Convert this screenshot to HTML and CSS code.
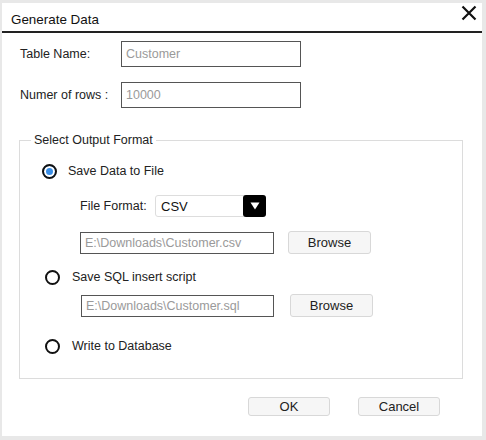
FILE: index.html
```html
<!DOCTYPE html>
<html>
<head>
<meta charset="utf-8">
<link rel="stylesheet" href="styles.css">
</head>
<body>
<div class="dialog">
  <div class="titlebar">
    <span class="title">Generate Data</span>
    <svg class="close" width="16" height="16" viewBox="0 0 16 16"><path d="M1.5 1.5 L14.5 14.5 M14.5 1.5 L1.5 14.5" stroke="#111" stroke-width="2.2" fill="none"/></svg>
  </div>
  <div class="form">
    <div class="field">
      <span class="label">Table Name:</span>
      <span class="input wide">Customer</span>
    </div>
    <div class="field">
      <span class="label">Numer of rows :</span>
      <span class="input wide">10000</span>
    </div>
  </div>
  <fieldset class="group">
    <legend>Select Output Format</legend>
    <div class="opt opt1"><span class="radio checked"></span><span>Save Data to File</span></div>
    <div class="ffrow">
      <span class="fflabel">File Format:</span>
      <span class="select"><span class="sel-text">CSV</span><span class="sel-btn"><svg width="10" height="8" viewBox="0 0 10 8"><path d="M0.5 0.5 L9.5 0.5 L5 7.5 Z" fill="#fff"/></svg></span></span>
    </div>
    <div class="pathrow p1"><span class="input path">E:\Downloads\Customer.csv</span><span class="btn browse">Browse</span></div>
    <div class="opt opt2"><span class="radio"></span><span>Save SQL insert script</span></div>
    <div class="pathrow p2"><span class="input path">E:\Downloads\Customer.sql</span><span class="btn browse">Browse</span></div>
    <div class="opt opt3"><span class="radio"></span><span>Write to Database</span></div>
  </fieldset>
  <div class="footer">
    <span class="btn action">OK</span>
    <span class="btn action">Cancel</span>
  </div>
</div>
</body>
</html>
```

FILE: styles.css
```css
html, body {
  margin: 0;
  padding: 0;
  background: #e8e8e8;
}
body {
  width: 486px;
  height: 440px;
  overflow: hidden;
  font-family: "Liberation Sans", Arial, sans-serif;
  font-size: 12.5px;
  color: #222;
}
.dialog {
  margin: 3px 0 0 2px;
  width: 480px;
  height: 433px;
  background: #fff;
  box-sizing: border-box;
  display: flex;
  flex-direction: column;
}
.titlebar {
  height: 28px;
  border-bottom: 2px solid #222;
  display: flex;
  align-items: center;
  justify-content: space-between;
  padding: 0 5px 0 9px;
}
.title {
  font-size: 13.4px;
  color: #111;
  margin-top: 5px;
}
.close {
  margin-top: -8px;
}
.form {
  display: flex;
  flex-direction: column;
  gap: 15px;
  padding: 8px 0 0 18px;
}
.field {
  display: flex;
  align-items: center;
}
.label {
  width: 101px;
  color: #222;
}
.input {
  display: flex;
  align-items: center;
  box-sizing: border-box;
  border: 1px solid #555;
  color: #9a9a9a;
  padding-left: 4px;
  background: #fff;
}
.wide {
  width: 180px;
  height: 26px;
}
.group {
  margin: 25px 0 0 17px;
  width: 444px;
  box-sizing: border-box;
  border: 1px solid #dcdcdc;
  padding: 0 0 22px 0;
  display: flex;
  flex-direction: column;
}
.group legend {
  margin-left: 11px;
  padding: 0 3px;
  color: #222;
}
.opt {
  display: flex;
  align-items: center;
  height: 20px;
}
.opt1 {
  margin-top: 14px;
  padding-left: 22px;
  gap: 11px;
}
.opt2 {
  margin-top: 13px;
  padding-left: 25px;
  gap: 12px;
}
.opt3 {
  margin-top: 19px;
  padding-left: 25px;
  gap: 12px;
}
.radio {
  width: 15px;
  height: 15px;
  box-sizing: border-box;
  border: 2px solid #111;
  border-radius: 50%;
  background: #fff;
}
.radio.checked {
  background: #3a8ee6;
  box-shadow: inset 0 0 0 2px #fff;
}
.ffrow {
  display: flex;
  align-items: center;
  margin-top: 14px;
  padding-left: 60px;
  height: 22px;
}
.fflabel {
  width: 75px;
}
.select {
  display: flex;
  width: 111px;
  height: 22px;
  box-sizing: border-box;
  border: 1px solid #ddd;
  border-radius: 3px;
}
.sel-text {
  flex: 1;
  display: flex;
  align-items: center;
  padding-left: 5px;
  font-size: 13px;
  color: #111;
}
.sel-btn {
  width: 23px;
  margin: -1px -1px -1px 0;
  background: #000;
  border-radius: 3px;
  display: flex;
  align-items: center;
  justify-content: center;
}
.pathrow {
  display: flex;
  align-items: center;
  height: 23px;
}
.p1 {
  margin-top: 14px;
  padding-left: 60px;
  gap: 14px;
}
.p2 {
  margin-top: 7px;
  padding-left: 61px;
  gap: 16px;
}
.path {
  height: 22px;
  width: 194px;
}
.p2 .path {
  width: 193px;
}
.btn {
  display: flex;
  align-items: center;
  justify-content: center;
  box-sizing: border-box;
  border: 1px solid #d8d8d8;
  border-radius: 3px;
  background: #f6f6f6;
  color: #222;
  font-size: 13px;
}
.browse {
  width: 83px;
  height: 23px;
}
.footer {
  display: flex;
  justify-content: flex-end;
  gap: 28px;
  margin-top: 18px;
  padding-right: 42px;
}
.action {
  width: 82px;
  height: 19px;
}
```
